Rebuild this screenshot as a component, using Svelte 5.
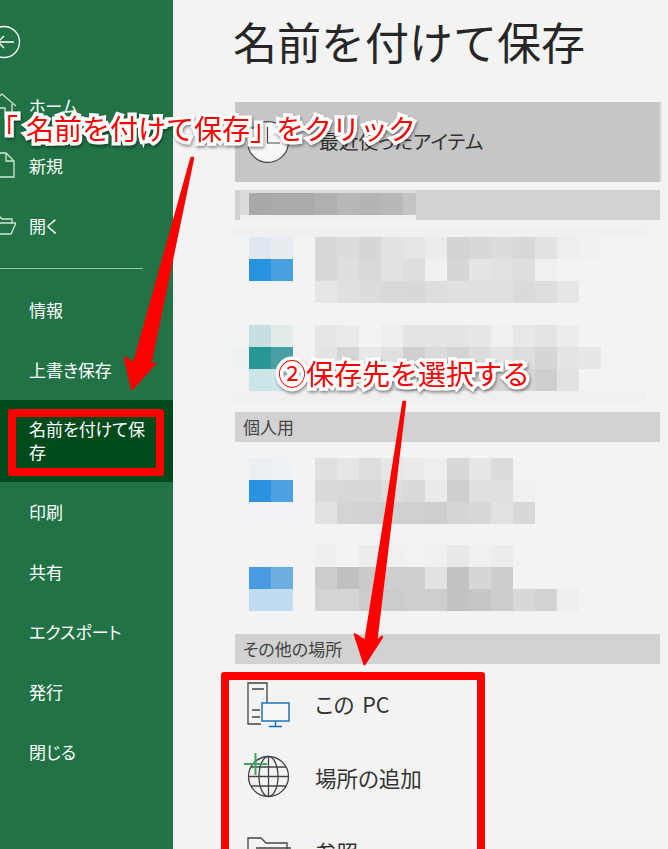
<script>
  const nav1 = ['情報', '上書き保存'];
  const nav2 = ['印刷', '共有', 'エクスポート', '発行', '閉じる'];
  const groupA = [
    { icon: [['e0e7f0','e8ecf1'],['2692e0','48a0e0'],['','']],
      text: [['d8','dc','d6','e2','e6','ec','d3','d8','dc','d8','e2','ee','f1'],
             ['d8','de','d9','e2','dd','f1','d6','e3','e1','de','f0','f2'],
             ['e6','e0','dc','d9','d8','dd','e0','e0','e0','da','de','e6']] },
    { icon: [['c8dfe2','e2ecea'],['269696','4a9ea4'],['cbe5e8','d0e6ea']],
      text: [['e6','ea','f3','ee','e4','e4','e4','e7','f0','e8','e3','ec'],
             ['e4','d6','e9','e0','d0','db','d4','dc','e4','de','d6','e3','e7'],
             ['ea','e2','dc','d6','d0','d0','d4','d4','d4','d4','ce','e2']] }
  ];
  const groupB = [
    { icon: [['ebeff3','eff2f5'],['2a92e0','4ca2e0'],['f0f2f5','f0f2f5']],
      text: [['e0','e6','dd','e6','ea','ee','d8','e6','dc'],
             ['da','d8','d8','de','d9','ea','cf','e0','e0','f0'],
             ['e2','d4','d2','d0','d0','ce','d6','d8','e2','d8']] },
    { icon: [['',''],['489be0','6daee0'],['c0dcf0','c0dcf0']],
      text: [['ef','f3','ec','f0','f2','f0','e8','f0','ec'],
             ['cd','c0','cb','ce','ce','e2','c2','d6','cd'],
             ['d4','d4','cc','cc','ce','ce','c2','c6','cc','d8','d2','ee']] }
  ];
  const headCells = ['a9a9a9','aaaaaa','aaaaaa','b0b0b0','b8b8b8','b4b4b4','b8b8b8','c4c4c4'];
  const grey = (g) => (g ? '#' + g + g + g : 'transparent');
  const hex = (c) => (c ? '#' + c : 'transparent');
</script>

{#snippet entry(e)}
  <div class="entry">
    <div class="icon-cells">
      {#each e.icon as row}
        <div class="cell-row">
          {#each row as c}<span class="cell" style="background:{hex(c)}"></span>{/each}
        </div>
      {/each}
    </div>
    <div class="text-cells">
      {#each e.text as row}
        <div class="cell-row">
          {#each row as g}<span class="cell" style="background:{grey(g)}"></span>{/each}
        </div>
      {/each}
    </div>
  </div>
{/snippet}

<div class="page">
  <aside class="side">
    <div class="back">
      <svg width="40" height="40" viewBox="0 0 40 40" fill="none" stroke="#fff" stroke-width="1.3">
        <circle cx="16" cy="20" r="15.5"/>
        <path d="M10 20H26M16 14L10 20L16 26"/>
      </svg>
    </div>
    <nav class="top">
      <div class="item withicon">
        <svg class="ico" width="28" height="28" viewBox="0 0 28 28" fill="none" stroke="#d5e3da" stroke-width="1.3">
          <path d="M0 14L14 2L28 14M4 12V26H11V16H17V26H24V12"/>
        </svg>
        <span>ホーム</span>
      </div>
      <div class="item withicon">
        <svg class="ico" width="28" height="28" viewBox="0 0 28 28" fill="none" stroke="#d5e3da" stroke-width="1.3">
          <path d="M2 2H18L26 10V26H2ZM18 2V10H26"/>
        </svg>
        <span>新規</span>
      </div>
      <div class="item withicon">
        <svg class="ico" width="28" height="28" viewBox="0 0 28 28" fill="none" stroke="#d5e3da" stroke-width="1.3">
          <path d="M0 23V5H11L14 8H24V12M0 23H23L28 12H5L0 23"/>
        </svg>
        <span>開く</span>
      </div>
    </nav>
    <div class="rule"></div>
    {#each nav1 as n}<div class="item">{n}</div>{/each}
    <div class="item current">名前を付けて保存</div>
    {#each nav2 as n}<div class="item">{n}</div>{/each}
  </aside>

  <main class="main">
    <h1>名前を付けて保存</h1>
    <div class="recent">
      <svg width="44" height="44" viewBox="0 0 44 44">
        <circle cx="22" cy="22" r="20.4" fill="#f8f8f8" stroke="#444" stroke-width="1.2"/>
        <path d="M21.5 7V23H34" fill="none" stroke="#444" stroke-width="1.2"/>
      </svg>
      <span>最近使ったアイテム</span>
    </div>
    <section>
      <div class="head head-mosaic">
        <div class="mosaic">
          {#each headCells as c}<span class="cell" style="background:#{c}"></span>{/each}
        </div>
      </div>
      <div class="list list-a">
        <div class="band band-top"></div>
        <div class="band band-side"></div>
        <div class="band band-end"></div>
        {#each groupA as e}<div class="lift">{@render entry(e)}</div>{/each}
      </div>
    </section>
    <section>
      <div class="head"><span>個人用</span></div>
      <div class="list list-b">
        {#each groupB as e}{@render entry(e)}{/each}
      </div>
    </section>
    <section>
      <div class="head"><span>その他の場所</span></div>
      <div class="places">
        <div class="place">
          <svg width="44" height="46" viewBox="0 0 44 46" fill="none">
            <path d="M20 21V1H1V42H14M5 7H17M5 28H13M5 35H13" stroke="#444" stroke-width="1.3"/>
            <rect x="15" y="21" width="27" height="18" fill="#f8f8f8" stroke="#0f6cbd" stroke-width="1.4"/>
            <path d="M28.5 39V44M22 44.5H35" stroke="#0f6cbd" stroke-width="1.4"/>
          </svg>
          <span class="pc">この PC</span>
        </div>
        <div class="place">
          <svg width="44" height="46" viewBox="0 0 44 46" fill="none">
            <circle cx="21.5" cy="20.5" r="20" stroke="#444" stroke-width="1.3"/>
            <ellipse cx="21.5" cy="20.5" rx="9.5" ry="20" stroke="#444" stroke-width="1.3"/>
            <path d="M21.5 0.5V40.5M1.5 20.5H41.5M4 11H39M4 30H39" stroke="#444" stroke-width="1.3"/>
            <path d="M8.5 -3V19M-3 8H20" stroke="#3fa45f" stroke-width="2"/>
          </svg>
          <span>場所の追加</span>
        </div>
        <div class="place">
          <svg width="44" height="46" viewBox="0 0 44 46" fill="none" stroke="#444" stroke-width="1.3">
            <path d="M1 40V8H14L19 13H40V40ZM9 18H44"/>
          </svg>
          <span>参照</span>
        </div>
      </div>
    </section>
  </main>

  <div class="mark mark-save"></div>
  <div class="mark mark-places"></div>
  <svg class="arrows" width="668" height="849" viewBox="0 0 668 849">
    <path d="M191.5 158L193 158L150 365L155 363.5L132 389L125 357.5L134 363.5Z" fill="#f00" stroke="#f00" stroke-width="2.5" stroke-linejoin="round"/>
    <path d="M403.5 402L405 402L376 642L382 637L364.5 664L355 634.5L365.5 641Z" fill="#f00" stroke="#f00" stroke-width="2.5" stroke-linejoin="round"/>
  </svg>
  <div class="note note-one"><span class="open">「</span>名前を付けて保存<span class="close">」</span>をクリック</div>
  <div class="note note-two">②保存先を選択する</div>
</div>

<style>
  :global(body) { margin: 0; }
  .page {
    position: relative;
    display: flex;
    width: 668px;
    height: 849px;
    overflow: hidden;
    background: #f3f3f3;
    font-family: "Noto Sans CJK JP", "Noto Sans", sans-serif;
    color: #333;
  }
  .side {
    flex: 0 0 173px;
    display: flex;
    flex-direction: column;
    background: #217346;
    color: #fff;
    font-size: 17px;
    font-feature-settings: "palt";
    overflow: hidden;
  }
  .back { height: 77px; display: flex; align-items: center; box-sizing: border-box; margin-left: -12px; padding-top: 6px; }
  .top { display: flex; flex-direction: column; }
  .item {
    height: 60px;
    display: flex;
    align-items: center;
    padding: 0 10px 2px 29px;
    box-sizing: border-box;
    flex: none;
  }
  .top .item:first-child { height: 59px; }
  .withicon { padding-left: 0; margin-left: -12px; gap: 13px; }
  .ico { flex: none; }
  .rule { height: 1px; width: 143px; background: #9cc4ab; margin: 12px 0 11px; flex: none; }
  .current { height: 82px; background: #014a1c; line-height: 23px; padding-right: 14px; }
  .main { flex: 1; min-width: 0; display: flex; flex-direction: column; padding: 0 8px 0 62px; }
  h1 {
    margin: 0 0 0 -2px;
    height: 102px;
    flex: none;
    font-size: 44px;
    font-weight: 400;
    line-height: 82px;
    color: #262626;
  }
  .recent {
    flex: none;
    height: 80px;
    margin-bottom: 8px;
    display: flex;
    align-items: center;
    gap: 29px;
    padding-left: 11px;
    background: #c6c6c6;
    font-size: 19.8px;
    font-feature-settings: "palt";
    box-shadow: 2px 0 0 #e2e2e2;
  }
  .recent span { margin-bottom: 4px; }
  .head {
    height: 30px;
    display: flex;
    align-items: center;
    padding-left: 8px;
    background: #d2d2d2;
    font-size: 17px;
    font-feature-settings: "palt";
    color: #444;
  }
  .head span { margin-bottom: 2px; }
  .head-mosaic { padding-left: 5px; align-items: flex-start; }
  .mosaic {
    display: flex;
    width: 176px;
    box-sizing: border-box;
    overflow: hidden;
    padding: 3px 0 5px 9px;
    background: linear-gradient(#dcdcdc, #dcdcdc) 0 0 / 100% 25px no-repeat, #f0f0f0;
  }
  .list { position: relative; display: flex; flex-direction: column; gap: 22px; }
  .list-a { height: 192px; box-sizing: border-box; padding-top: 17px; }
  .lift { position: relative; }
  .band { position: absolute; background: #f0f0f0; }
  .band-top { left: -3px; top: 6px; width: 414px; height: 11px; }
  .band-side { left: -3px; top: 127px; width: 17px; height: 22px; background: #eef1f1; }
  .band-end { left: -3px; top: 171px; width: 414px; height: 11px; }
  .list-b { height: 192px; box-sizing: border-box; padding-top: 16px; gap: 21px; }
  .entry { display: flex; gap: 22px; padding-left: 14px; }
  .cell-row { display: flex; height: 22px; }
  .cell { display: block; width: 22px; height: 22px; flex: none; }
  .places { display: flex; flex-direction: column; padding-top: 4px; }
  .place {
    height: 74px;
    flex: none;
    display: flex;
    align-items: center;
    gap: 24px;
    padding-left: 12px;
    font-size: 21.5px;
    font-feature-settings: "palt";
    color: #333;
  }
  .place span { margin-bottom: 3px; }
  .place svg { flex: none; overflow: visible; }
  .pc { word-spacing: 3px; }
  .mark {
    position: absolute;
    border: 8px solid #f00;
    border-radius: 3px;
    box-sizing: border-box;
  }
  .mark-save { left: 8px; top: 409px; width: 156px; height: 67px; }
  .mark-places { left: 221px; top: 672px; width: 264px; height: 240px; }
  .arrows { position: absolute; left: 0; top: 0; pointer-events: none; }
  .note {
    position: absolute;
    font-size: 28px;
    line-height: 36px;
    font-weight: 400;
    white-space: nowrap;
    color: #f00;
    text-spacing-trim: space-all;
    -webkit-text-stroke: 7px #fff;
    paint-order: stroke fill;
    filter: drop-shadow(1px 2px 1.5px rgba(0, 0, 0, 0.4));
  }
  .open { display: inline-block; margin: 0 4px 0 -4px; transform: translateX(-4px); }
  .close { display: inline-block; margin-right: -2px; }
  .note-one { left: -2px; top: 110px; }
  .note-two { left: 278px; top: 355px; }
</style>
